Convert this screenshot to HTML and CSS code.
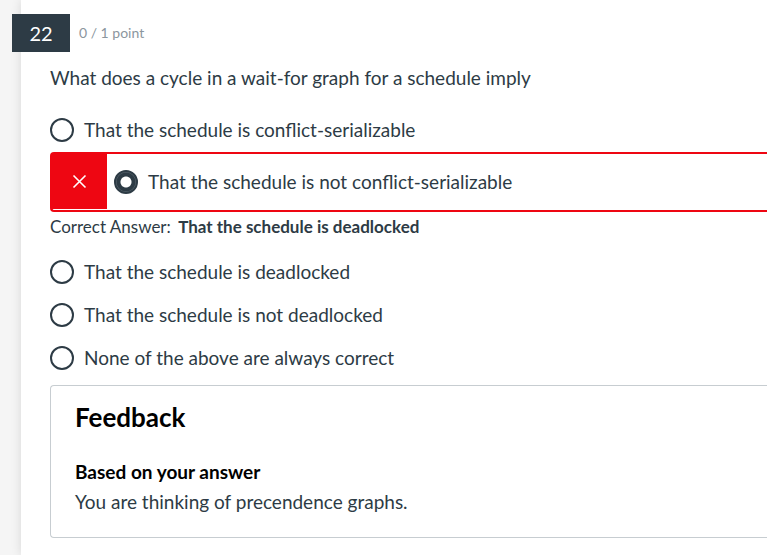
FILE: index.html
```html
<!DOCTYPE html>
<html lang="en">
<head>
<meta charset="utf-8">
<title>Quiz question 22</title>
<link rel="stylesheet" href="styles.css">
</head>
<body>
<main class="card">
  <header class="head">
    <span class="number">22</span>
    <span class="points">0 / 1 point</span>
  </header>
  <form class="question">
    <fieldset class="choices">
      <legend class="prompt">What does a cycle in a wait-for graph for a schedule imply</legend>
      <label class="choice"><input class="radio" type="radio" name="answer">That the schedule is conflict-serializable</label>
      <div class="wrong">
        <span class="mark"><svg width="15" height="15" viewBox="0 0 15 15" role="img" aria-label="Incorrect"><path d="M1.5 1.5L13.5 13.5M13.5 1.5L1.5 13.5" stroke="currentColor" stroke-width="1.6" fill="none"/></svg></span>
        <label class="choice"><input class="radio" type="radio" name="answer" checked>That the schedule is not conflict-serializable</label>
      </div>
      <p class="correct">Correct Answer: <strong class="solution">That the schedule is deadlocked</strong></p>
      <label class="choice option"><input class="radio" type="radio" name="answer">That the schedule is deadlocked</label>
      <label class="choice option"><input class="radio" type="radio" name="answer">That the schedule is not deadlocked</label>
      <label class="choice option"><input class="radio" type="radio" name="answer">None of the above are always correct</label>
    </fieldset>
  </form>
  <section class="feedback">
    <h2 class="title">Feedback</h2>
    <h3 class="subtitle">Based on your answer</h3>
    <p class="message">You are thinking of precendence graphs.</p>
  </section>
</main>
</body>
</html>
```
FILE: styles.css
```css
* { box-sizing: border-box; }
body {
  margin: 0;
  min-height: 100vh;
  padding-left: 21px;
  background: #f5f5f5;
  color: #2d3b45;
  font: 19px/30px Lato, "Liberation Sans", sans-serif;
}
.card {
  min-height: 100vh;
  padding: 14px 0 17px;
  background: #fff;
  box-shadow: 0 0 10px rgba(0, 0, 0, 0.12);
}
.head {
  display: flex;
  align-items: center;
  gap: 9px;
  margin-left: -9px;
}
.number {
  width: 58px;
  height: 38px;
  background: #2d3b45;
  color: #fff;
  font-size: 20px;
  line-height: 38px;
  text-align: center;
}
.points { color: #8b969e; font-size: 14px; line-height: 20px; }
.question { margin-left: 29px; }
.choices { margin: 0; padding: 0; border: 0; min-width: 0; }
.prompt { padding: 11px 0 15px; }
.choice { display: flex; align-items: center; gap: 10px; height: 44px; }
.radio {
  appearance: none;
  flex: none;
  width: 24px;
  height: 24px;
  margin: 0;
  border: 2px solid #2d3b45;
  border-radius: 50%;
  background: #fff;
}
.radio:checked {
  background: radial-gradient(circle, #fff 5px, #2d3b45 6px, #2d3b45 9px, #65717a 10px, #2d3b45 11px);
}
.wrong {
  display: flex;
  align-items: center;
  gap: 7px;
  height: 60px;
  border: 2px solid #ee0612;
  border-right: 0;
  border-radius: 4px 0 0 4px;
}
.mark {
  display: grid;
  place-items: center;
  align-self: stretch;
  width: 55px;
  margin-bottom: 1px;
  background: #ee0612;
  color: #fff;
}
.correct { margin: 0 0 8px; font-size: 17px; }
.solution { margin-left: 3px; }
.option { height: 43px; }
.feedback {
  margin: 6px 0 0 29px;
  padding: 16px 24px 20px;
  border: 1px solid #c7cdd1;
  border-right: 0;
  border-radius: 4px 0 0 4px;
}
.title { margin: 0 0 25px; color: #000; font-size: 26px; line-height: 30px; }
.subtitle { margin: 0; color: #000; font-size: 19px; }
.message { margin: 0; }
```
